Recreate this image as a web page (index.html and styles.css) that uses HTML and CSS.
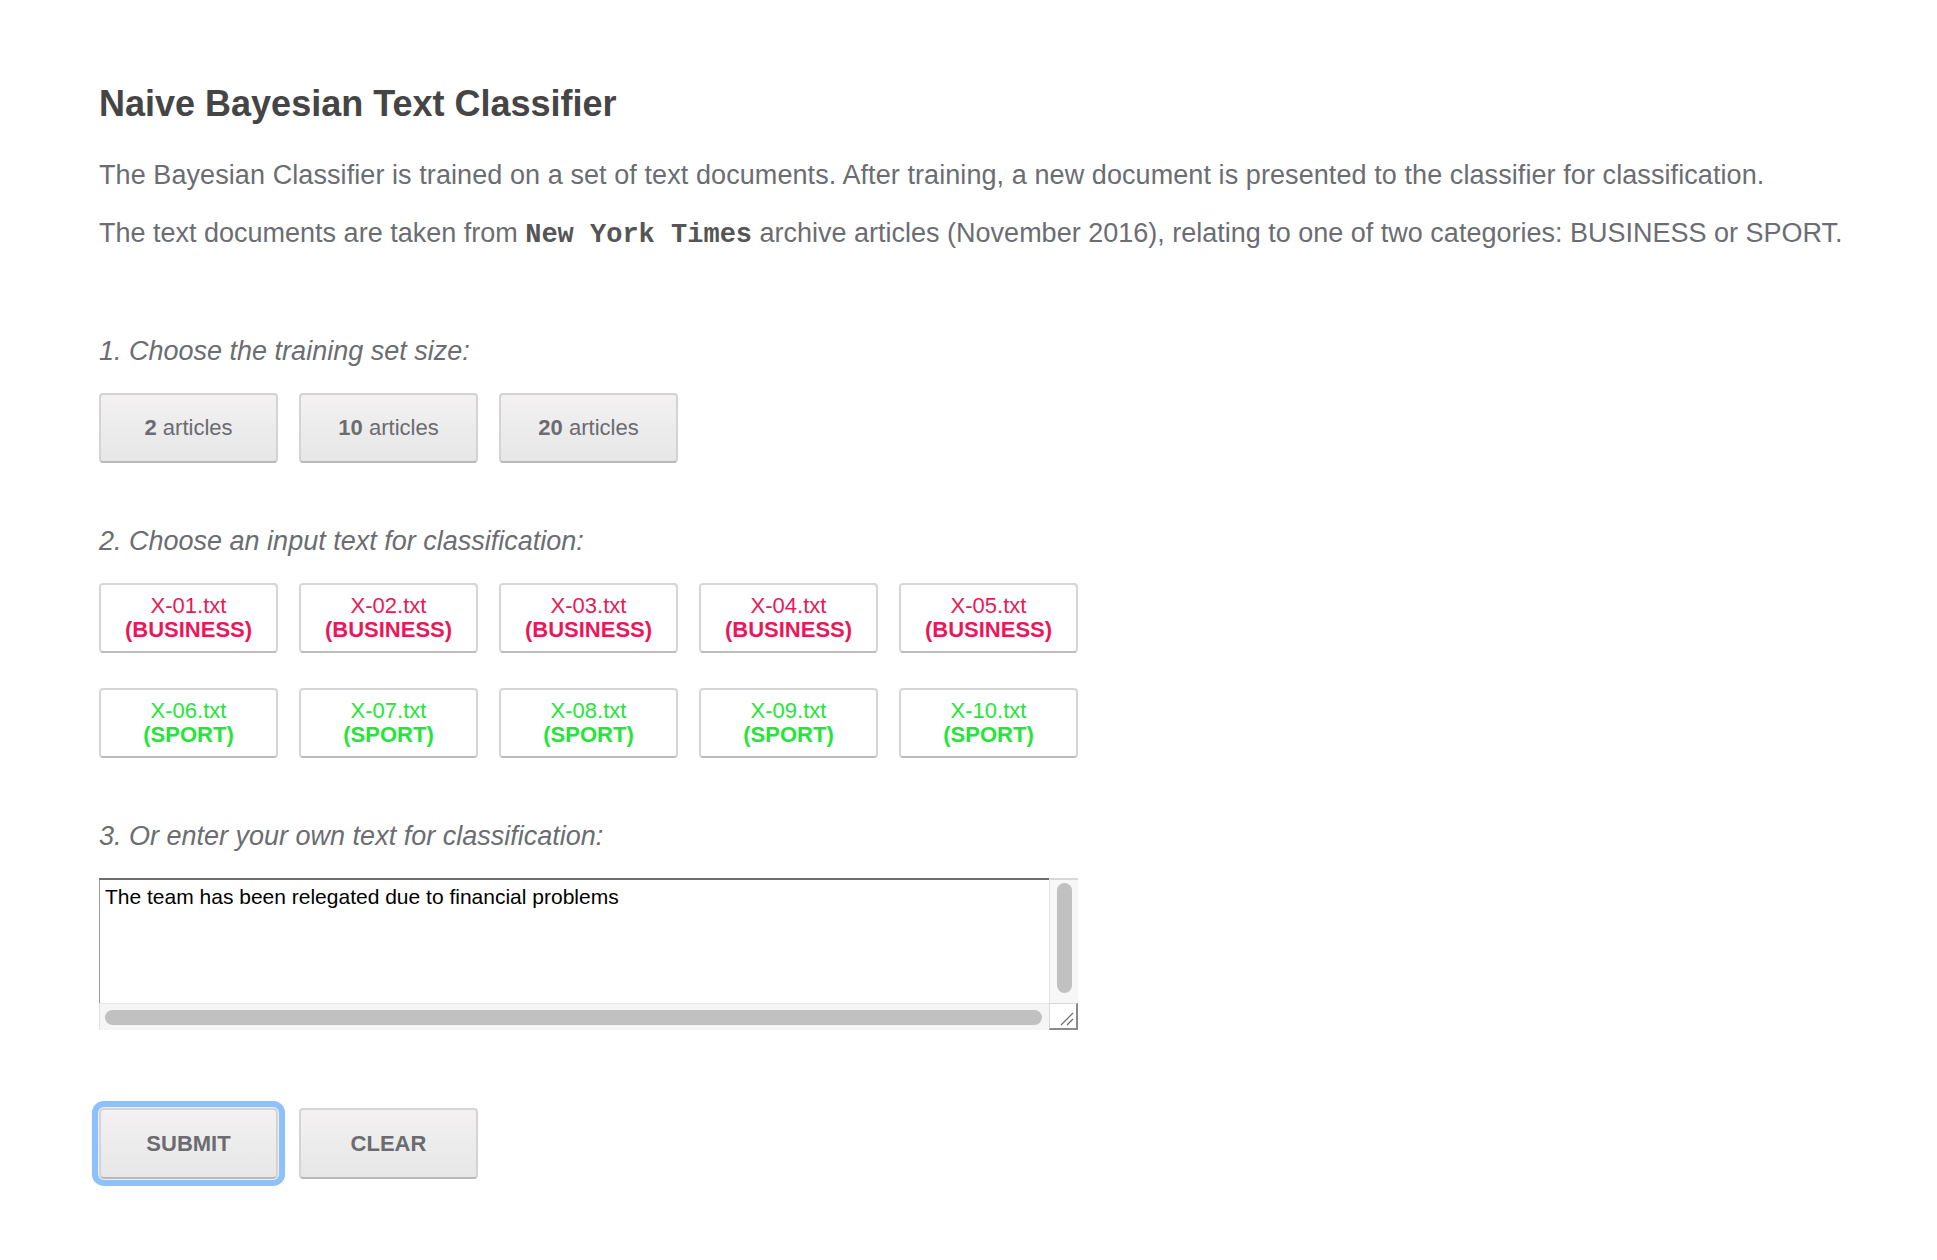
FILE: index.html
```html
<!DOCTYPE html>
<html>
<head>
<meta charset="utf-8">
<title>Naive Bayesian Text Classifier</title>
<link rel="stylesheet" href="styles.css">
</head>
<body>
<main class="page">
  <h1 class="title">Naive Bayesian Text Classifier</h1>
  <p class="intro first">The Bayesian Classifier is trained on a set of text documents. After training, a new document is presented to the classifier for classification.</p>
  <p class="intro second">The text documents are taken from <code class="mono">New York Times</code> archive articles (November 2016), relating to one of two categories: BUSINESS or SPORT.</p>

  <h2 class="step">1. Choose the training set size:</h2>
  <div class="row">
    <button class="btn"><b>2</b> articles</button>
    <button class="btn"><b>10</b> articles</button>
    <button class="btn"><b>20</b> articles</button>
  </div>

  <h2 class="step">2. Choose an input text for classification:</h2>
  <div class="row">
    <button class="file business">X-01.txt<br><b>(BUSINESS)</b></button>
    <button class="file business">X-02.txt<br><b>(BUSINESS)</b></button>
    <button class="file business">X-03.txt<br><b>(BUSINESS)</b></button>
    <button class="file business">X-04.txt<br><b>(BUSINESS)</b></button>
    <button class="file business">X-05.txt<br><b>(BUSINESS)</b></button>
  </div>
  <div class="row row-second">
    <button class="file sport">X-06.txt<br><b>(SPORT)</b></button>
    <button class="file sport">X-07.txt<br><b>(SPORT)</b></button>
    <button class="file sport">X-08.txt<br><b>(SPORT)</b></button>
    <button class="file sport">X-09.txt<br><b>(SPORT)</b></button>
    <button class="file sport">X-10.txt<br><b>(SPORT)</b></button>
  </div>

  <h2 class="step">3. Or enter your own text for classification:</h2>
  <div class="editor">
    <textarea class="editor-text">The team has been relegated due to financial problems</textarea>
    <div class="vbar"><div class="vthumb"></div></div>
    <div class="hbar"><div class="hthumb"></div></div>
    <div class="corner">
      <svg width="16" height="16" viewBox="0 0 16 16"><path d="M3 15 L15 3 M9 15 L15 9" stroke="#6a6a6a" stroke-width="1.2" fill="none"/></svg>
    </div>
  </div>

  <div class="actions">
    <button class="btn caps focused">SUBMIT</button>
    <button class="btn caps">CLEAR</button>
  </div>
</main>
</body>
</html>
```

FILE: styles.css
```css
* { box-sizing: border-box; }

body {
  margin: 0;
  background: #ffffff;
  font-family: "Liberation Sans", Arial, Helvetica, sans-serif;
}

.page {
  padding: 83px 0 60px 99px;
}

.title {
  margin: 0;
  font-size: 36px;
  line-height: 42px;
  font-weight: bold;
  color: #454545;
}

.intro {
  margin: 31px 0 0;
  font-size: 27px;
  line-height: 38px;
  color: #6b6d72;
  white-space: nowrap;
}

.intro.first {
  letter-spacing: 0.08px;
}

.intro.second {
  margin-top: 20px;
}

.mono {
  font-family: "Liberation Mono", "Courier New", monospace;
  font-weight: bold;
  font-size: 27px;
  color: #555;
}

.step {
  margin: 78px 0 23px;
  font-size: 27px;
  line-height: 38px;
  font-style: italic;
  font-weight: normal;
  color: #6b6d72;
}

.row + .step {
  margin-top: 59px;
}

.row {
  display: flex;
  gap: 21px;
}

.row-second {
  margin-top: 35px;
}

.btn {
  width: 179px;
  height: 70px;
  padding: 0;
  border: 2px solid #d4d4d4;
  border-bottom-color: #b9b9b9;
  border-radius: 4px;
  background: linear-gradient(#f3f1f1, #e7e7e8);
  font-family: "Liberation Sans", Arial, Helvetica, sans-serif;
  font-size: 22px;
  color: #6b6b70;
}

.btn b { font-weight: bold; }

.file {
  width: 179px;
  height: 70px;
  padding: 0;
  border: 2px solid #d6d6d6;
  border-bottom-color: #bcbcbc;
  border-radius: 4px;
  background: #ffffff;
  font-family: "Liberation Sans", Arial, Helvetica, sans-serif;
  font-size: 22px;
  line-height: 24px;
}

.business { color: #e8195a; }
.sport { color: #27e43a; }

.editor {
  display: grid;
  grid-template-columns: 1fr 29px;
  grid-template-rows: 1fr 27px;
  width: 979px;
  height: 152px;
}

.editor-text {
  grid-column: 1;
  grid-row: 1;
  margin: 0;
  resize: none;
  border: none;
  border-top: 2px solid #6e6e6e;
  border-left: 1px solid #9a9a9a;
  padding: 5px 5px;
  font-family: "Liberation Sans", Arial, Helvetica, sans-serif;
  font-size: 21px;
  line-height: 24px;
  color: #000;
  background: #fff;
  overflow: hidden;
  outline: none;
}

.vbar {
  grid-column: 2;
  grid-row: 1;
  background: #f7f7f7;
  border-left: 1px solid #e6e6e6;
  border-top: 2px solid #d8d8d8;
  display: flex;
  justify-content: center;
  padding-top: 3px;
}

.vthumb {
  width: 15px;
  height: 110px;
  border-radius: 8px;
  background: #c1c1c1;
}

.hbar {
  grid-column: 1;
  grid-row: 2;
  background: #f5f5f5;
  border-top: 1px solid #e6e6e6;
  border-left: 1px solid #e0e0e0;
  padding: 6px 6px 0 5px;
}

.hthumb {
  width: 937px;
  height: 15px;
  border-radius: 8px;
  background: #c1c1c1;
}

.corner {
  grid-column: 2;
  grid-row: 2;
  background: #fff;
  border-top: 1px solid #d8d8d8;
  border-left: 1px solid #d8d8d8;
  border-right: 2px solid #8a8a8a;
  border-bottom: 2px solid #8a8a8a;
  display: flex;
  align-items: flex-end;
  justify-content: flex-end;
  padding: 0 2px 2px 0;
}

.actions {
  display: flex;
  gap: 21px;
  margin-top: 78px;
}

.caps {
  font-weight: bold;
  font-size: 22px;
  height: 71px;
}

.focused {
  box-shadow: 0 0 0 1px #e8f1fc, 0 0 0 7px #8ec0f9;
  border-radius: 5px;
}
```
